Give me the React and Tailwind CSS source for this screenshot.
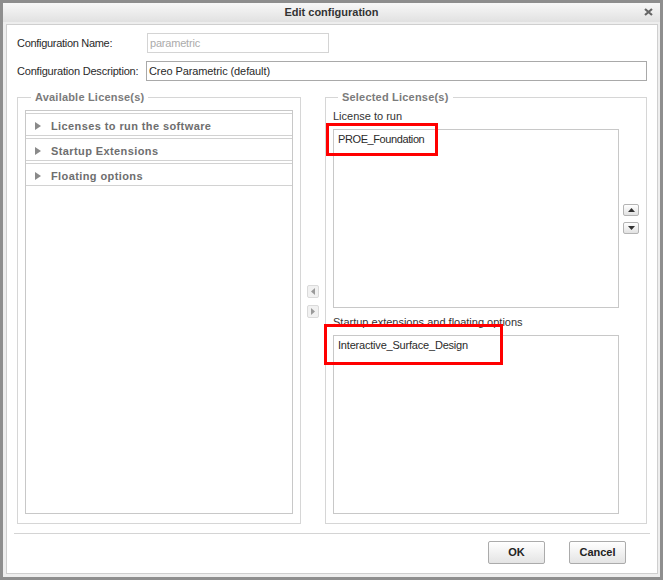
import React from "react";

const Tri = ({ dir, color, w, h }) => {
    const pts = {
        right: `0,0 ${w},${h / 2} 0,${h}`,
        left: `${w},0 0,${h / 2} ${w},${h}`,
        up: `0,${h} ${w / 2},0 ${w},${h}`,
        down: `0,0 ${w},0 ${w / 2},${h}`,
    }[dir];
    return (
        <svg width={w} height={h} viewBox={`0 0 ${w} ${h}`} className="block">
            <polygon points={pts} fill={color} />
        </svg>
    );
};

const TreeRow = ({ label }) => (
    <div className="h-[23px] mb-[2px] border-t border-b border-[#d2d2d2] flex items-center pl-[9px] pt-[3px]">
        <Tri dir="right" color="#8a8a8a" w={6} h={8} />
        <span className="ml-[10px] text-[11px] font-bold tracking-[0.4px] text-[#6e6e6e]">{label}</span>
    </div>
);

const App = () => {
    return (
        <div className="relative w-[663px] h-[580px] bg-[#8e8e8e] p-[3px] font-['Liberation_Sans',Arial,sans-serif] text-[#2a2a2a]">
            <div className="h-full flex flex-col bg-[#eeeeee]">
                {/* title bar */}
                <div className="relative h-[19px] bg-gradient-to-b from-[#f8f8f8] to-[#e1e1e1] flex items-center justify-center">
                    <span className="text-[11px] font-bold text-[#333]">Edit configuration</span>
                    <svg width="9" height="8" viewBox="0 0 9 8" className="absolute right-[7px] top-[5px]">
                        <path d="M1 1 L8 7 M8 1 L1 7" stroke="#666" strokeWidth="2.2" />
                    </svg>
                </div>

                <div className="flex-1 px-[3px] pt-[2px] pb-[3px] flex">
                    <div className="flex-1 bg-white border border-[#cfcfcf] flex flex-col">
                        {/* fields */}
                        <div className="pl-[10px] pt-[8px] text-[11px]">
                            <div className="flex items-center h-[20px]">
                                <span className="w-[130px] tracking-[-0.3px]">Configuration Name:</span>
                                <div className="w-[182px] h-[20px] border border-[#d4d4d4] flex items-center pl-[2px] text-[#ababab] tracking-[-0.2px]">
                                    parametric
                                </div>
                            </div>
                            <div className="flex items-center h-[20px] mt-[8px]">
                                <span className="w-[129px] tracking-[-0.2px]">Configuration Description:</span>
                                <div className="w-[501px] h-[20px] border border-[#a9a9a9] flex items-center pl-[2px] tracking-[-0.1px]">
                                    Creo Parametric (default)
                                </div>
                            </div>
                        </div>

                        {/* license panels */}
                        <div className="flex px-[10px] mt-[10px]">
                            <fieldset className="w-[284px] border border-[#d6d6d6] px-[7px] pb-[9px]">
                                <legend className="ml-[6px] px-[4px] text-[11px] leading-[13px] font-bold tracking-[0.2px] text-[#7b7b7b]">
                                    Available License(s)
                                </legend>
                                <div className="mt-[6px] h-[404px] border border-[#c8c8c8] pt-[2px]">
                                    <TreeRow label="Licenses to run the software" />
                                    <TreeRow label="Startup Extensions" />
                                    <TreeRow label="Floating options" />
                                </div>
                            </fieldset>

                            <div className="w-[24px] flex flex-col items-center justify-center gap-[7px] pt-[6px] pb-[18px]">
                                <div className="w-[12px] h-[13px] rounded-[2px] border border-[#dadada] bg-[#f1f1f1] flex items-center justify-center">
                                    <Tri dir="left" color="#9a9a9a" w={4} h={7} />
                                </div>
                                <div className="w-[12px] h-[13px] rounded-[2px] border border-[#dadada] bg-[#f1f1f1] flex items-center justify-center">
                                    <Tri dir="right" color="#9a9a9a" w={4} h={7} />
                                </div>
                            </div>

                            <fieldset className="flex-1 border border-[#d6d6d6] px-[7px] pb-[9px]">
                                <legend className="ml-[5px] px-[4px] text-[11px] leading-[13px] font-bold tracking-[0.2px] text-[#7b7b7b]">
                                    Selected License(s)
                                </legend>
                                <div className="mt-[6px] flex">
                                    <div className="w-[286px]">
                                        <div className="h-[13px] leading-[13px] text-[11px] text-[#333]">License to run</div>
                                        <div className="mt-[6px] h-[179px] border border-[#c8c8c8] pl-[4px] pt-[3px] text-[11px] tracking-[-0.4px] leading-[13px]">
                                            PROE_Foundation
                                        </div>
                                        <div className="mt-[8px] h-[13px] leading-[13px] text-[11px] text-[#333]">
                                            Startup extensions and floating options
                                        </div>
                                        <div className="mt-[6px] h-[179px] border border-[#c8c8c8] pl-[4px] pt-[3px] text-[11px] tracking-[-0.2px] leading-[13px]">
                                            Interactive_Surface_Design
                                        </div>
                                    </div>
                                    <div className="ml-[4px] h-[198px] flex flex-col justify-end gap-[6px] pb-[74px]">
                                        <div className="w-[16px] h-[12px] rounded-[2px] border border-[#b4b4b4] bg-gradient-to-b from-white to-[#e2e2e2] flex items-center justify-center">
                                            <Tri dir="up" color="#333" w={7} h={4} />
                                        </div>
                                        <div className="w-[16px] h-[12px] rounded-[2px] border border-[#b4b4b4] bg-gradient-to-b from-white to-[#e2e2e2] flex items-center justify-center">
                                            <Tri dir="down" color="#333" w={7} h={4} />
                                        </div>
                                    </div>
                                </div>
                            </fieldset>
                        </div>

                        {/* footer */}
                        <div className="mx-[7px] mt-[9px] h-px bg-[#d4d4d4]" />
                        <div className="flex justify-end gap-[24px] pr-[31px] mt-[7px]">
                            <button className="w-[57px] h-[23px] rounded-[2px] border border-[#ababab] bg-gradient-to-b from-white to-[#e4e4e4] text-[11px] font-bold text-[#222]">
                                OK
                            </button>
                            <button className="w-[57px] h-[23px] rounded-[2px] border border-[#ababab] bg-gradient-to-b from-white to-[#e4e4e4] text-[11px] font-bold text-[#222]">
                                Cancel
                            </button>
                        </div>
                    </div>
                </div>
            </div>

            {/* annotation boxes */}
            <div className="absolute left-[326px] top-[123px] w-[112px] h-[33px] border-[3px] border-[#ff0000]" />
            <div className="absolute left-[324px] top-[324px] w-[179px] h-[41px] border-[3px] border-[#ff0000]" />
        </div>
    );
};

export default App;
